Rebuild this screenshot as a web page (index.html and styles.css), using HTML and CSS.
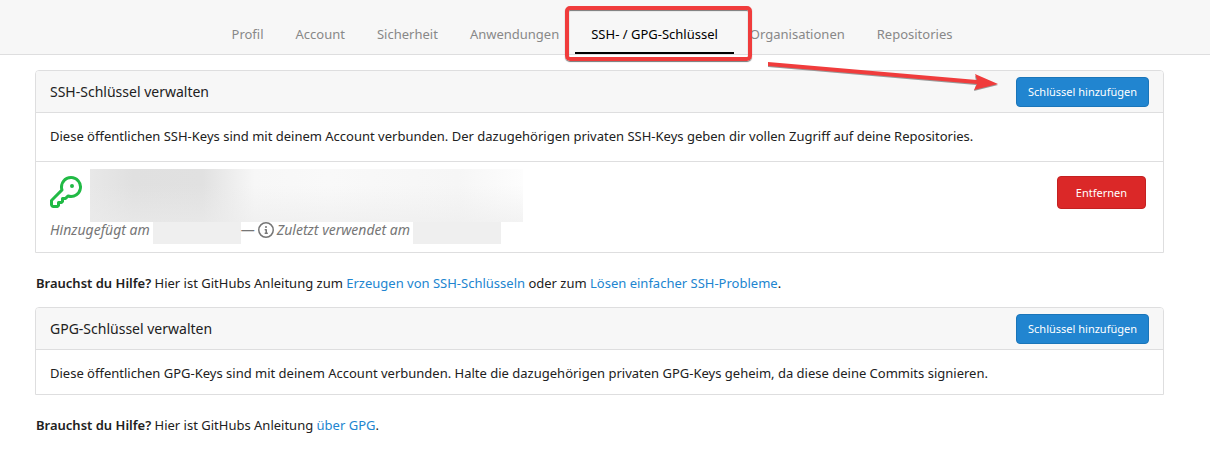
FILE: index.html
```
<!DOCTYPE html>
<html lang="de">
<head>
<meta charset="utf-8">
<title>SSH- / GPG-Schlüssel</title>
<link rel="stylesheet" href="styles.css">
</head>

<body>
<nav class="tabs">
	<a class="tab" href="#">Profil</a>
	<a class="tab" href="#">Account</a>
	<a class="tab" href="#">Sicherheit</a>
	<a class="tab" href="#">Anwendungen</a>
	<a class="tab active" href="#">SSH- / GPG-Schlüssel<span class="frame"></span></a>
	<a class="tab" href="#">Organisationen</a>
	<a class="tab" href="#">Repositories</a>
</nav>

<main class="content">
	<section class="panel">
		<header class="panel-header">
			<h4>SSH-Schlüssel verwalten</h4>
			<button class="button primary" type="button">Schlüssel hinzufügen</button>
			<svg class="arrow" width="234" height="36" viewBox="0 0 234 36" aria-hidden="true">
				<path class="shadow" d="M1 3 L209 21 L208 16 L231 25 L207 31 L209 25 L1 7z"/>
				<path d="M1 2 L210 20 L208 14 L231 24 L207 30 L210 24 L1 6z"/>
			</svg>
		</header>
		<p class="panel-text">Diese öffentlichen SSH-Keys sind mit deinem Account verbunden. Der dazugehörigen privaten SSH-Keys geben dir vollen Zugriff auf deine Repositories.</p>
		<div class="key">
			<div class="key-info">
				<div class="key-title">
					<svg class="key-icon" width="32" height="32" viewBox="0 0 16 16" aria-hidden="true"><path fill-rule="evenodd" d="M6.5 5.5a4 4 0 1 1 2.731 3.795.75.75 0 0 0-.768.18L7.44 10.5H6.25a.75.75 0 0 0-.75.75v1.19l-.06.06H4.25a.75.75 0 0 0-.75.75v1.19l-.06.06H1.75a.25.25 0 0 1-.25-.25v-1.69l5.024-5.023a.75.75 0 0 0 .181-.768A3.995 3.995 0 0 1 6.5 5.5zm4-5.5a5.5 5.5 0 0 0-5.348 6.788L.22 11.72a.75.75 0 0 0-.22.53v2C0 15.216.784 16 1.75 16h2a.75.75 0 0 0 .53-.22l.5-.5a.75.75 0 0 0 .22-.53V14h.75a.75.75 0 0 0 .53-.22l.5-.5a.75.75 0 0 0 .22-.53V12h.75a.75.75 0 0 0 .53-.22l.932-.932A5.5 5.5 0 1 0 10.5 0zm.5 6a1 1 0 1 0 0-2 1 1 0 0 0 0 2z"/></svg>
					<span class="hidden-name"></span>
				</div>
				<div class="key-meta">
					<i>Hinzugefügt am</i>
					<span class="hidden-date"></span>
					<span>—</span>
					<svg class="info-icon" width="16" height="16" viewBox="0 0 16 16" aria-hidden="true"><path fill-rule="evenodd" d="M8 1.5a6.5 6.5 0 1 0 0 13 6.5 6.5 0 0 0 0-13zM0 8a8 8 0 1 1 16 0A8 8 0 0 1 0 8zm6.5-.25A.75.75 0 0 1 7.25 7h1a.75.75 0 0 1 .75.75v2.75h.25a.75.75 0 0 1 0 1.5h-2a.75.75 0 0 1 0-1.5h.25v-2h-.25a.75.75 0 0 1-.75-.75zM8 6a1 1 0 1 0 0-2 1 1 0 0 0 0 2z"/></svg>
					<i>Zuletzt verwendet am</i>
					<span class="hidden-date"></span>
				</div>
			</div>
			<button class="button danger" type="button">Entfernen</button>
		</div>
	</section>

	<p class="help"><strong>Brauchst du Hilfe?</strong> Hier ist GitHubs Anleitung zum <a href="#">Erzeugen von SSH-Schlüsseln</a> oder zum <a href="#">Lösen einfacher SSH-Probleme</a>.</p>

	<section class="panel">
		<header class="panel-header">
			<h4>GPG-Schlüssel verwalten</h4>
			<button class="button primary" type="button">Schlüssel hinzufügen</button>
		</header>
		<p class="panel-text">Diese öffentlichen GPG-Keys sind mit deinem Account verbunden. Halte die dazugehörigen privaten GPG-Keys geheim, da diese deine Commits signieren.</p>
	</section>

	<p class="help"><strong>Brauchst du Hilfe?</strong> Hier ist GitHubs Anleitung <a href="#">über GPG</a>.</p>
</main>
</body>
</html>
```
FILE: styles.css
```
* { box-sizing: border-box; }
body {
	margin: 0;
	background: #fff;
	color: #212121;
	font: 13px/20px "Noto Sans", "Open Sans", sans-serif;
}
h4, p { margin: 0; }
a { color: #2185d0; text-decoration: none; }
strong { font-weight: 600; }

.tabs {
	display: flex;
	justify-content: center;
	padding: 14px 26px 0 0;
	border-bottom: 1px solid #dededf;
	background: #f7f7f7;
}
.tab {
	position: relative;
	padding: 10px 16px 8px;
	border-bottom: 2px solid transparent;
	color: #888;
	white-space: nowrap;
}
.tab.active {
	border-color: #000;
	color: #000;
}
/* marker drawn over the tab */
.frame {
	position: absolute;
	z-index: 1;
	top: -8px;
	right: -18px;
	bottom: -9px;
	left: -10px;
	border: 4px solid #f03c3c;
	border-radius: 5px;
	box-shadow: 0 1px 1px #777, inset 0 1px 1px #777;
}

.content { padding: 15px 46px 0 35px; }
.panel {
	border: 1px solid #dededf;
	border-radius: 4px 4px 0 0;
}
.panel-header {
	position: relative;
	display: flex;
	align-items: center;
	justify-content: space-between;
	padding: 6px 14px 5px;
	border-bottom: 1px solid #dededf;
	border-radius: 3px 3px 0 0;
	background: #f7f7f7;
}
.panel-header h4 {
	font-size: 14px;
	font-weight: normal;
}
.panel-text { padding: 13px 14px 11px; }

.arrow {
	position: absolute;
	top: -11px;
	right: 162px;
	fill: #f03c3c;
}
.arrow .shadow { fill: #999; }

.button {
	height: 30px;
	padding: 0 11px;
	border: 1px solid #1a75b9;
	border-radius: 4px;
	background: #2185d0;
	color: #fff;
	font: 11px/20px "Noto Sans", "Open Sans", sans-serif;
}
.button.danger {
	height: 33px;
	margin: 7px 3px 0 0;
	padding: 0 18px;
	border-color: #c42121;
	background: #db2828;
}

.key {
	display: flex;
	align-items: flex-start;
	justify-content: space-between;
	margin-top: 4px;
	padding: 7px 14px 8px;
	border-top: 1px solid #dededf;
}
.key-title {
	display: flex;
	gap: 8px;
}
.key-icon {
	margin-top: 7px;
	fill: #21ba45;
}
.hidden-name {
	width: 433px;
	height: 53px;
	background: linear-gradient(#fff0 30%, #ececec99), linear-gradient(90deg, #e8e8e8, #e0e0e0 10%, #e1e1e1 26%, #f7f7f7 38%, #f9f9f9 55%, #f6f6f6 85%, #fdfdfd);
}
.key-meta {
	display: flex;
	color: #767676;
	font-size: 14px;
	line-height: 16px;
	white-space: nowrap;
}
.hidden-date {
	width: 88px;
	height: 22px;
	margin-left: 3px;
	background: #efefef;
}
.info-icon {
	margin: 0 3px;
	fill: #767676;
}

.help { padding: 20px 1px 14px; }
```
